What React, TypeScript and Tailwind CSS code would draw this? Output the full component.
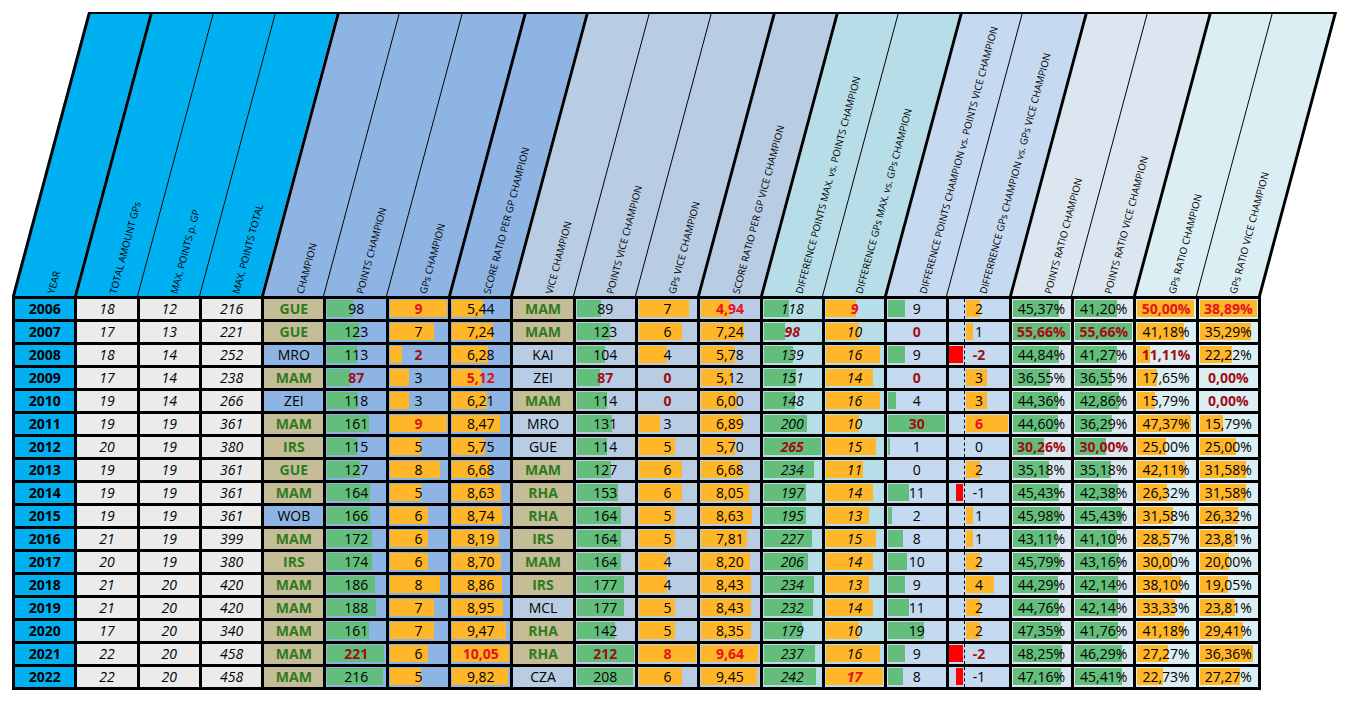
import React from "react";

type Bar = "g" | "o" | "axis" | null;

const LABELS = [
  "YEAR",
  "TOTAL AMOUNT GPs",
  "MAX. POINTS p. GP",
  "MAX. POINTS TOTAL",
  "CHAMPION",
  "POINTS CHAMPION",
  "GPs CHAMPION",
  "SCORE RATIO PER GP CHAMPION",
  "VICE CHAMPION",
  "POINTS VICE CHAMPION",
  "GPs VICE CHAMPION",
  "SCORE RATIO PER GP VICE CHAMPION",
  "DIFFERENCE POINTS MAX. vs. POINTS CHAMPION",
  "DIFFERENCE GPs MAX. vs. GPs CHAMPION",
  "DIFFERENCE POINTS CHAMPION vs. POINTS VICE CHAMPION",
  "DIFFERRENCE GPs CHAMPION vs. GPs VICE CHAMPION",
  "POINTS RATIO CHAMPION",
  "POINTS RATIO VICE CHAMPION",
  "GPs RATIO CHAMPION",
  "GPs RATIO VICE CHAMPION",
];

const HEAD_BG = [
  "bg-[#00b0f0]", "bg-[#00b0f0]", "bg-[#00b0f0]", "bg-[#00b0f0]",
  "bg-[#8db4e2]", "bg-[#8db4e2]", "bg-[#8db4e2]", "bg-[#8db4e2]",
  "bg-[#b8cce4]", "bg-[#b8cce4]", "bg-[#b8cce4]", "bg-[#b8cce4]",
  "bg-[#b7dee8]", "bg-[#b7dee8]",
  "bg-[#c5d9f1]", "bg-[#c5d9f1]",
  "bg-[#dce6f1]", "bg-[#dce6f1]",
  "bg-[#daeef3]", "bg-[#daeef3]",
];

const BODY_BG = [
  "bg-[#00b0f0]", "bg-[#ebebeb]", "bg-[#ebebeb]", "bg-[#ebebeb]",
  ...HEAD_BG.slice(4),
];

// thick separators in the slanted header (left border of column i)
const THICK = new Set([0, 1, 4, 7, 8, 11, 12, 14, 16, 18]);
const ITALIC = new Set([1, 2, 3, 12, 13]);

const BARS: Bar[] = [
  null, null, null, null, null, "g", "o", "o", null, "g",
  "o", "o", "g", "o", "g", "axis", "g", "g", "o", "o",
];

// suffix: "+" champion highlight, "!" bright red, "*" dark red
const ROWS: string[][] = [
  ["2006", "18", "12", "216", "GUE+", "98", "9!", "5,44", "MAM+", "89", "7", "4,94!", "118", "9!", "9", "2", "45,37%", "41,20%", "50,00%!", "38,89%!"],
  ["2007", "17", "13", "221", "GUE+", "123", "7", "7,24", "MAM+", "123", "6", "7,24", "98*", "10", "0*", "1", "55,66%*", "55,66%*", "41,18%", "35,29%"],
  ["2008", "18", "14", "252", "MRO", "113", "2*", "6,28", "KAI", "104", "4", "5,78", "139", "16", "9", "-2*", "44,84%", "41,27%", "11,11%*", "22,22%"],
  ["2009", "17", "14", "238", "MAM+", "87*", "3", "5,12!", "ZEI", "87*", "0*", "5,12", "151", "14", "0*", "3", "36,55%", "36,55%", "17,65%", "0,00%*"],
  ["2010", "19", "14", "266", "ZEI", "118", "3", "6,21", "MAM+", "114", "0*", "6,00", "148", "16", "4", "3", "44,36%", "42,86%", "15,79%", "0,00%*"],
  ["2011", "19", "19", "361", "MAM+", "161", "9!", "8,47", "MRO", "131", "3", "6,89", "200", "10", "30*", "6!", "44,60%", "36,29%", "47,37%", "15,79%"],
  ["2012", "20", "19", "380", "IRS+", "115", "5", "5,75", "GUE", "114", "5", "5,70", "265*", "15", "1", "0", "30,26%*", "30,00%*", "25,00%", "25,00%"],
  ["2013", "19", "19", "361", "GUE+", "127", "8", "6,68", "MAM+", "127", "6", "6,68", "234", "11", "0", "2", "35,18%", "35,18%", "42,11%", "31,58%"],
  ["2014", "19", "19", "361", "MAM+", "164", "5", "8,63", "RHA+", "153", "6", "8,05", "197", "14", "11", "-1", "45,43%", "42,38%", "26,32%", "31,58%"],
  ["2015", "19", "19", "361", "WOB", "166", "6", "8,74", "RHA+", "164", "5", "8,63", "195", "13", "2", "1", "45,98%", "45,43%", "31,58%", "26,32%"],
  ["2016", "21", "19", "399", "MAM+", "172", "6", "8,19", "IRS+", "164", "5", "7,81", "227", "15", "8", "1", "43,11%", "41,10%", "28,57%", "23,81%"],
  ["2017", "20", "19", "380", "IRS+", "174", "6", "8,70", "MAM+", "164", "4", "8,20", "206", "14", "10", "2", "45,79%", "43,16%", "30,00%", "20,00%"],
  ["2018", "21", "20", "420", "MAM+", "186", "8", "8,86", "IRS+", "177", "4", "8,43", "234", "13", "9", "4", "44,29%", "42,14%", "38,10%", "19,05%"],
  ["2019", "21", "20", "420", "MAM+", "188", "7", "8,95", "MCL", "177", "5", "8,43", "232", "14", "11", "2", "44,76%", "42,14%", "33,33%", "23,81%"],
  ["2020", "17", "20", "340", "MAM+", "161", "7", "9,47", "RHA+", "142", "5", "8,35", "179", "10", "19", "2", "47,35%", "41,76%", "41,18%", "29,41%"],
  ["2021", "22", "20", "458", "MAM+", "221*", "6", "10,05!", "RHA+", "212*", "8!", "9,64!", "237", "16", "9", "-2*", "48,25%", "46,29%", "27,27%", "36,36%"],
  ["2022", "22", "20", "458", "MAM+", "216", "5", "9,82", "CZA", "208", "6", "9,45", "242", "17!", "8", "-1", "47,16%", "45,41%", "22,73%", "27,27%"],
];

const num = (s: string) => parseFloat(s.replace(/[!*+%]/g, "").replace(",", "."));

const MAX = BARS.map((_, c) => Math.max(...ROWS.map((r) => num(r[c]))));

const BAR_W = 57;
const AXIS = 15;
const UNIT = 7;

// every layer of a cell sits in the same single grid area
const LAYER = "[grid-area:1/1]";

function DataCell({ raw, col }: { raw: string; col: number }) {
  const tan = raw.endsWith("+");
  const bright = raw.endsWith("!");
  const dark = raw.endsWith("*");
  const text = raw.replace(/[!*+]$/, "");
  const v = num(raw);
  const bar = BARS[col];

  let tone = "text-black";
  if (col === 0) tone = "font-bold text-black";
  if (tan) tone = "font-bold text-[#2f7a1e]";
  if (bright) tone = "font-bold text-[#e3131b]";
  if (dark) tone = "font-bold text-[#a00d12]";

  let barEl: React.ReactNode = null;
  if ((bar === "g" || bar === "o") && v > 0) {
    barEl = (
      <div
        className={`${LAYER} ml-[1px] mt-[1px] mb-[2px] justify-self-start ${bar === "g" ? "bg-[#63be7b]" : "bg-[#ffb628]"}`}
        style={{ width: (v / MAX[col]) * BAR_W }}
      />
    );
  } else if (bar === "axis") {
    barEl = (
      <>
        {v > 0 && (
          <div
            className={`${LAYER} mt-[1px] mb-[2px] justify-self-start bg-[#ffb628]`}
            style={{ marginLeft: AXIS + 1.5, width: v * UNIT }}
          />
        )}
        {v < 0 && (
          <div
            className={`${LAYER} mt-[1px] mb-[2px] justify-self-start bg-[#ff0000]`}
            style={{ marginLeft: AXIS - 1 + v * UNIT, width: -v * UNIT }}
          />
        )}
        <div className={`${LAYER} ml-[15px] justify-self-start border-l border-dashed border-black`} />
      </>
    );
  }

  return (
    <div
      className={`grid h-[20px] overflow-hidden ${tan ? "bg-[#c4bd97]" : BODY_BG[col]}`}
    >
      {barEl}
      <span
        className={`${LAYER} self-center justify-self-center text-[14px] leading-none ${tone} ${ITALIC.has(col) ? "italic" : ""}`}
      >
        {text}
      </span>
    </div>
  );
}

function HeaderCell({ label, col }: { label: string; col: number }) {
  const last = col === LABELS.length - 1;
  return (
    <div
      className={`flex h-full shrink-0 items-end border-black ${HEAD_BG[col]} ${THICK.has(col) ? "border-l-[3px]" : "border-l-[1.5px]"} ${last ? "w-[65.3px] border-r-[3px]" : "w-[62.3px]"}`}
    >
      <div className="mb-[1px] ml-[41px] w-0">
        <div className="origin-bottom-left whitespace-nowrap text-[9.8px] leading-[11px] text-black [transform:skewX(15deg)_rotate(-75deg)]">
          {label}
        </div>
      </div>
    </div>
  );
}

export default function App() {
  return (
    <div className="h-[704px] w-[1345px] overflow-hidden bg-white pl-[12px] pt-[12px] font-['Open_Sans',sans-serif]">
      <div className="flex h-[284px] w-fit origin-bottom-left -skew-x-15 border-t-2 border-black">
        {LABELS.map((l, i) => (
          <HeaderCell key={i} label={l} col={i} />
        ))}
      </div>
      <div className="grid w-fit grid-cols-[repeat(20,59.3px)] gap-[3px] bg-black p-[3px]">
        {ROWS.map((r, ri) =>
          r.map((c, ci) => <DataCell key={`${ri}-${ci}`} raw={c} col={ci} />)
        )}
      </div>
    </div>
  );
}
